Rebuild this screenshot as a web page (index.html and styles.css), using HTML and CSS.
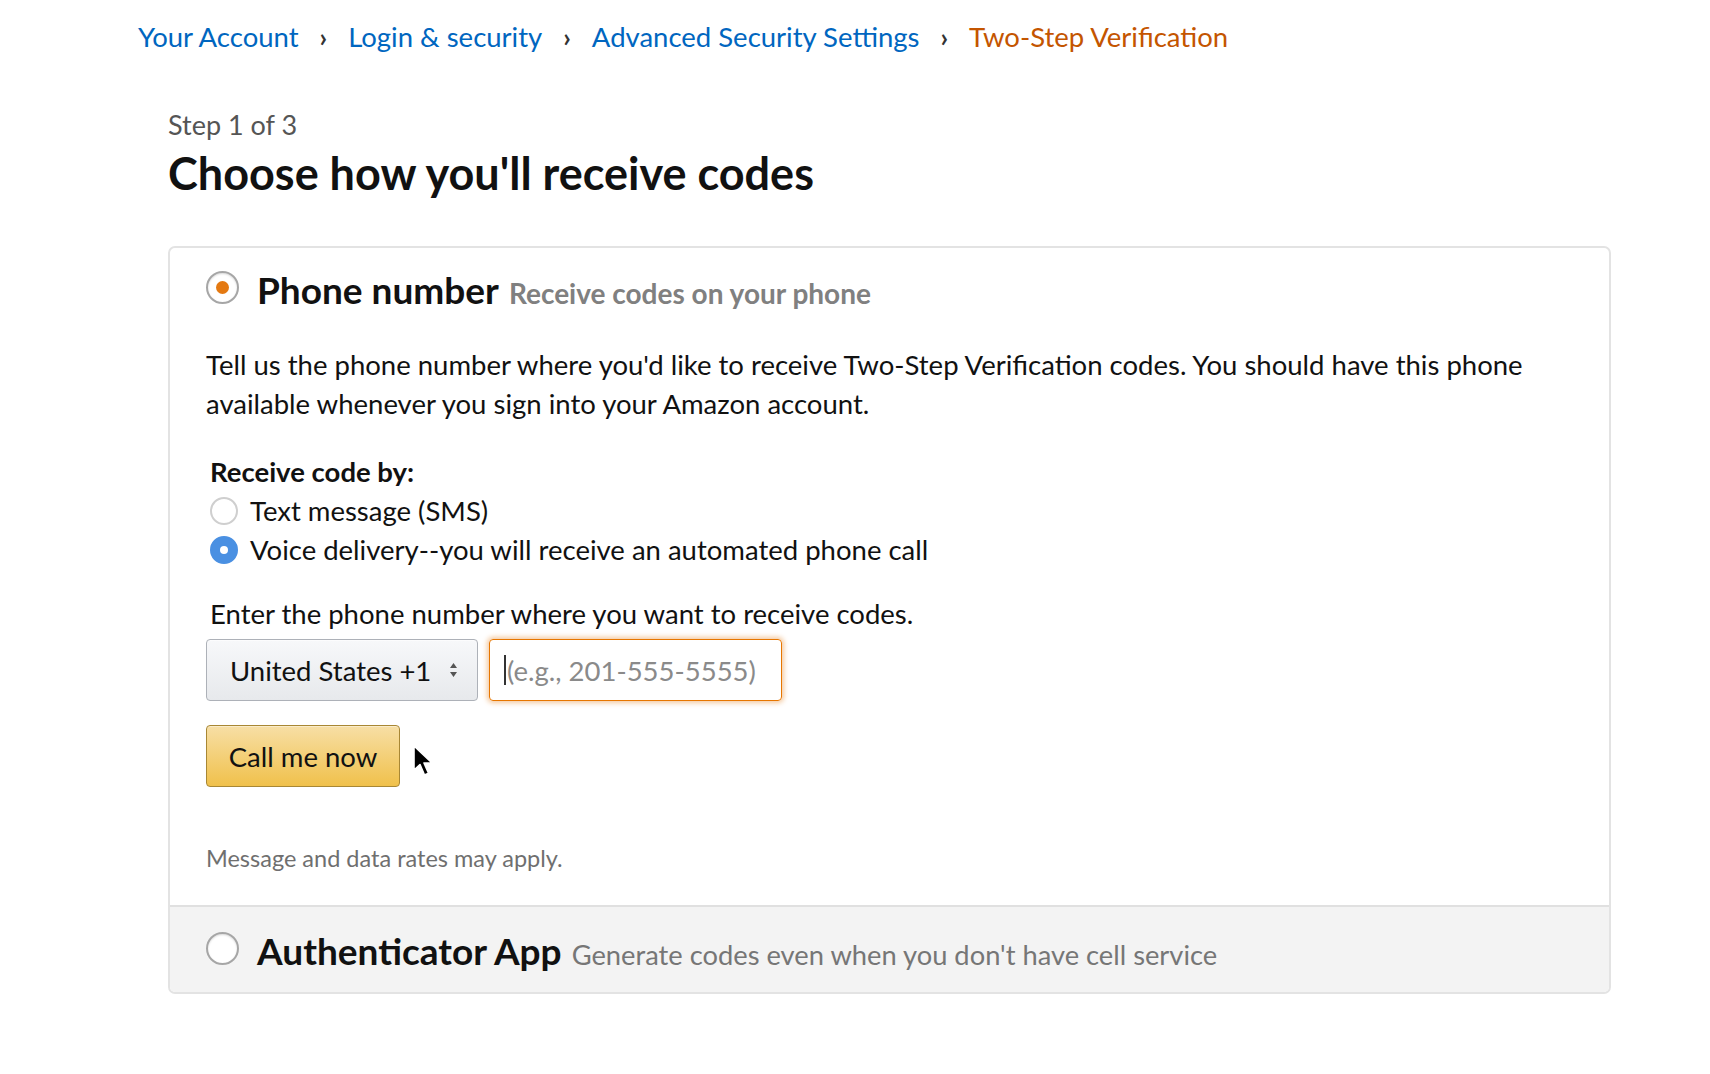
FILE: index.html
```html
<!DOCTYPE html>
<html lang="en">
<head>
    <meta charset="UTF-8">
    <meta name="viewport" content="width=device-width, initial-scale=1.0">
    <title>Two-Step Verification</title>
    <link rel="stylesheet" href="styles.css">
</head>
<body>
    <!-- breadcrumb -->
    <nav class="crumbs">
        <a href="#">Your Account</a>
        <span class="sep">›</span>
        <a href="#">Login &amp; security</a>
        <span class="sep">›</span>
        <a href="#">Advanced Security Settings</a>
        <span class="sep">›</span>
        <span class="current">Two-Step Verification</span>
    </nav>

    <main class="page">
        <div class="step">Step 1 of 3</div>
        <h1>Choose how you'll receive codes</h1>

        <div class="box">
            <!-- phone option -->
            <section class="opt opt-open">
                <div class="opt-head">
                    <span class="big-radio checked"></span>
                    <span class="opt-title">Phone number</span>
                    <span class="opt-sub">Receive codes on your phone</span>
                </div>

                <p class="intro">Tell us the phone number where you'd like to receive Two-Step Verification codes. You should have this phone available whenever you sign into your Amazon account.</p>

                <div class="by">
                    <div class="by-label">Receive code by:</div>
                    <label class="choice"><span class="radio"></span>Text message (SMS)</label>
                    <label class="choice"><span class="radio on"></span>Voice delivery--you will receive an automated phone call</label>
                </div>

                <div class="enter">Enter the phone number where you want to receive codes.</div>
                <div class="phone-row">
                    <div class="country">
                        United States +1
                        <svg class="arrows" width="9" height="16" viewBox="0 0 9 16">
                            <path d="M4.5 1 L8 6 L1 6 Z M4.5 15 L8 10 L1 10 Z" fill="#555"/>
                        </svg>
                    </div>
                    <div class="phone-input"><span class="caret"></span>(e.g., 201-555-5555)</div>
                </div>

                <div class="btn-row">
                    <button type="button" class="call-btn">Call me now</button>
                    <svg class="pointer" width="22" height="32" viewBox="0 0 22 32">
                        <path d="M2 1 L2 25 L8 19.5 L12.5 30 L16.5 28.3 L12 18 L20 18 Z" fill="#000" stroke="#fff" stroke-width="1.6" stroke-linejoin="round"/>
                    </svg>
                </div>

                <div class="rates">Message and data rates may apply.</div>
            </section>

            <!-- authenticator option -->
            <section class="opt opt-closed">
                <div class="opt-head">
                    <span class="big-radio"></span>
                    <span class="opt-title">Authenticator App</span>
                    <span class="opt-sub light">Generate codes even when you don't have cell service</span>
                </div>
            </section>
        </div>
    </main>
</body>
</html>
```

FILE: styles.css
```css
/* base */
body {
    margin: 0;
    background: #fff;
    color: #111;
    font-family: Lato, "Liberation Sans", sans-serif;
}

/* breadcrumb */
.crumbs {
    display: flex;
    align-items: center;
    gap: 21px;
    padding: 18px 0 0 138px;
    font-size: 27.5px;
    line-height: 38px;
}
.crumbs a {
    color: #0066c0;
    text-decoration: none;
}
.crumbs .sep {
    color: #333;
    font-size: 26px;
    font-weight: 700;
}
.crumbs .current {
    color: #c45500;
}

/* main */
.page {
    padding: 51px 0 0 168px;
    width: 1443px;
}
.step {
    color: #555;
    font-size: 27px;
    line-height: 36px;
}
h1 {
    margin: 2px 0 0 0;
    font-size: 45px;
    font-weight: 700;
    line-height: 56px;
}

/* options box */
.box {
    margin-top: 45px;
    border: 2px solid #e3e3e3;
    border-radius: 7px;
    overflow: hidden;
}
.opt-open {
    padding: 20px 36px 33px 36px;
}
.opt-closed {
    background: #f3f3f3;
    border-top: 2px solid #e0e0e0;
    padding: 22px 36px 19px 36px;
}
.opt-head {
    display: flex;
    align-items: center;
}
.big-radio {
    width: 33px;
    height: 33px;
    border: 2px solid #a6a6a6;
    border-radius: 50%;
    background: #fff;
    box-sizing: border-box;
    margin: 0 18px 6px 0;
    display: flex;
    align-items: center;
    justify-content: center;
    box-shadow: inset 0 1px 2px rgba(0,0,0,.15);
}
.big-radio.checked::after {
    content: "";
    width: 13px;
    height: 13px;
    border-radius: 50%;
    background: #e47911;
}
.opt-title {
    font-size: 37px;
    font-weight: 700;
    line-height: 44px;
}
.opt-sub {
    margin-left: 10px;
    margin-top: 6px;
    font-size: 28px;
    font-weight: 700;
    color: #808080;
}
.opt-sub.light {
    font-size: 27.3px;
    font-weight: 400;
    color: #767676;
}

.intro {
    margin: 33px 0 0 0;
    font-size: 27.5px;
    line-height: 39px;
    color: #111;
}

/* delivery choice */
.by {
    margin-top: 29px;
    padding-left: 4px;
    font-size: 27.5px;
    line-height: 39px;
}
.by-label {
    font-weight: 700;
}
.choice {
    display: flex;
    align-items: center;
}
.radio {
    width: 28px;
    height: 28px;
    border: 2px solid #cfcfcf;
    border-radius: 50%;
    box-sizing: border-box;
    margin-right: 12px;
    display: flex;
    align-items: center;
    justify-content: center;
}
.radio.on {
    background: #4a90e2;
    border-color: #4a90e2;
}
.radio.on::after {
    content: "";
    width: 8px;
    height: 8px;
    border-radius: 50%;
    background: #fff;
}

.enter {
    margin-top: 25px;
    padding-left: 4px;
    font-size: 27.5px;
    line-height: 40px;
}

/* phone row */
.phone-row {
    display: flex;
    gap: 11px;
    margin-top: 5px;
}
.country {
    width: 272px;
    height: 62px;
    box-sizing: border-box;
    display: flex;
    align-items: center;
    padding-left: 23px;
    font-size: 27.5px;
    border: 1px solid #adb1b8;
    border-radius: 4px;
    background: linear-gradient(#f7f8fa, #e7e9ec);
    box-shadow: 0 1px 0 rgba(255,255,255,.6) inset;
}
.arrows {
    margin-left: 18px;
}
.phone-input {
    width: 293px;
    height: 62px;
    box-sizing: border-box;
    display: flex;
    align-items: center;
    padding-left: 14px;
    font-size: 27.5px;
    color: #8a8a8a;
    border: 1px solid #e77600;
    border-radius: 4px;
    box-shadow: 0 0 5px 2px rgba(228,121,17,.4);
}
.caret {
    width: 2px;
    height: 30px;
    background: #333;
    margin-right: 1px;
}

/* button */
.btn-row {
    display: flex;
    align-items: flex-start;
    margin-top: 24px;
}
.call-btn {
    width: 194px;
    height: 62px;
    font-family: inherit;
    font-size: 27.5px;
    color: #111;
    border: 1px solid #a88734;
    border-radius: 4px;
    background: linear-gradient(#f7dfa5, #f0c14b);
    box-shadow: 0 1px 0 rgba(255,255,255,.4) inset;
}
.pointer {
    margin: 20px 0 0 12px;
}

.rates {
    margin-top: 57px;
    font-size: 23.5px;
    line-height: 28px;
    color: #6f6f6f;
}
```
